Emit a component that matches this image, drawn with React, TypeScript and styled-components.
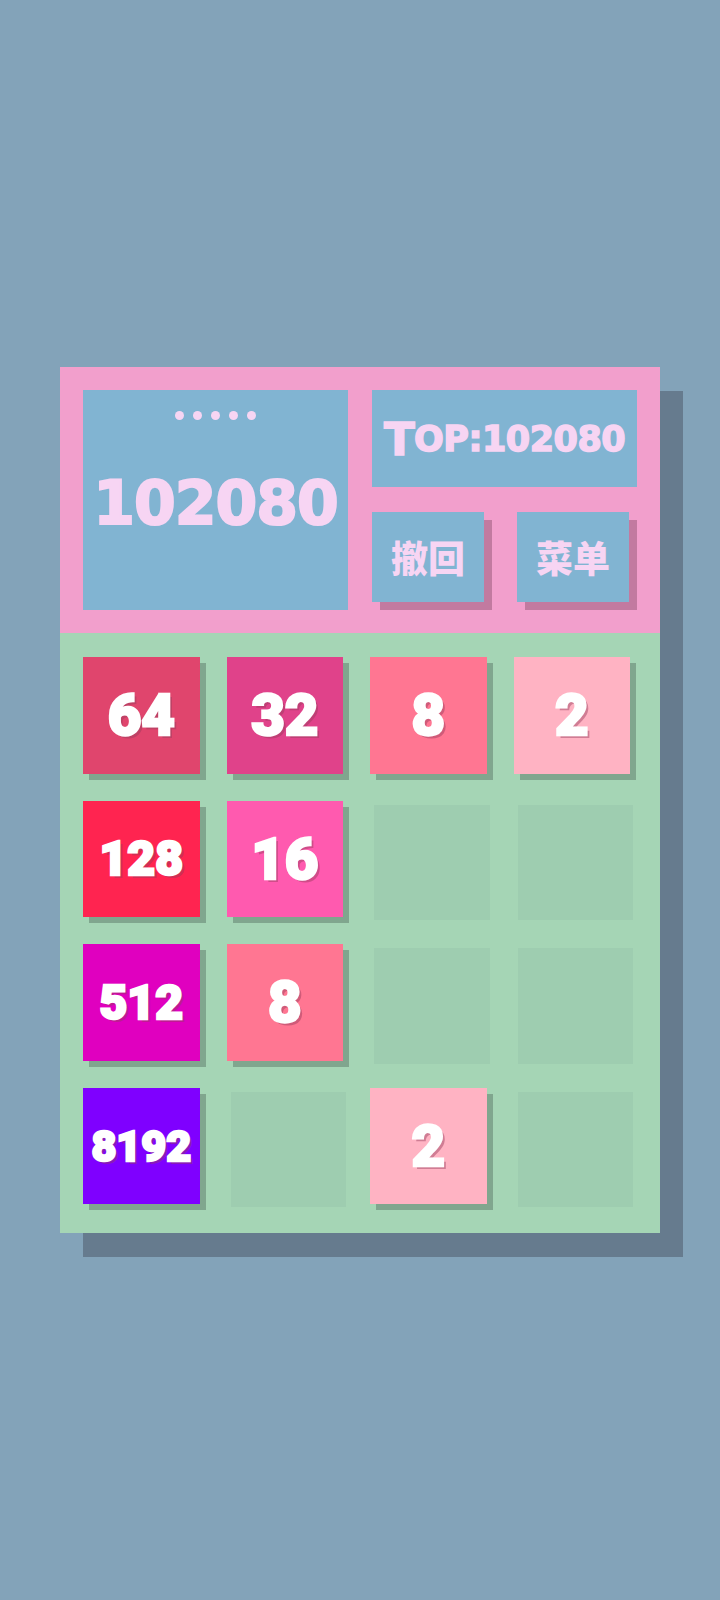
import React from 'react'
import styled, { createGlobalStyle } from 'styled-components'

const GlobalStyle = createGlobalStyle`
  html, body {
    margin: 0;
    padding: 0;
    background: #83a3b9;
  }
`

const headerText = '#f7d5f3'

const tileColors: Record<number, string> = {
  2: '#ffb3c3',
  8: '#ff7692',
  16: '#ff5aaf',
  32: '#e0428a',
  64: '#e0456d',
  128: '#ff2450',
  512: '#e000bf',
  8192: '#7f00ff',
}

const Screen = styled.div`
  width: 720px;
  height: 1600px;
  display: flex;
  align-items: center;
  justify-content: center;
  background: #83a3b9;
`

const Board = styled.div`
  width: 600px;
  display: flex;
  flex-direction: column;
  box-shadow: 23px 24px 0 #667b8e;
`

const Header = styled.div`
  height: 266px;
  box-sizing: border-box;
  padding: 23px;
  background: #f29fcc;
  display: grid;
  grid-template-columns: 1fr 1fr;
  column-gap: 24px;
`

const ScoreBox = styled.div`
  background: #81b4d2;
  display: flex;
  flex-direction: column;
  align-items: center;
`

const Dots = styled.div`
  display: flex;
  gap: 9px;
  margin-top: 21px;
`

const Dot = styled.span`
  width: 9px;
  height: 9px;
  border-radius: 50%;
  background: ${headerText};
`

const Score = styled.div`
  margin-top: 53px;
  font-family: 'DejaVu Sans', sans-serif;
  font-weight: 700;
  font-size: 60px;
  line-height: 1;
  letter-spacing: -1px;
  color: ${headerText};
  -webkit-text-stroke: 2px ${headerText};
`

const Side = styled.div`
  display: grid;
  grid-template-rows: 97px 90px;
  row-gap: 25px;
`

const BestBox = styled.div`
  background: #81b4d2;
  display: flex;
  align-items: center;
  justify-content: center;
  font-family: 'DejaVu Sans', sans-serif;
  font-weight: 700;
  font-size: 35px;
  line-height: 1;
  letter-spacing: -0.5px;
  color: ${headerText};
  -webkit-text-stroke: 1.5px ${headerText};
  padding-top: 2px;
`

const Initial = styled.span`
  font-size: 45px;
`

const Actions = styled.div`
  display: grid;
  grid-template-columns: 1fr 1fr;
  column-gap: 25px;
`

const ActionButton = styled.button`
  all: unset;
  width: calc(100% - 8px);
  height: 90px;
  display: flex;
  align-items: center;
  justify-content: center;
  background: #81b4d2;
  box-shadow: 8px 8px 0 #c27aa0;
  font-family: 'Noto Sans CJK SC', sans-serif;
  font-weight: 900;
  font-size: 37px;
  color: ${headerText};
  cursor: pointer;
`

const Grid = styled.div`
  height: 600px;
  box-sizing: border-box;
  padding: 28px 27px 26px;
  background: #a5d5b5;
  display: grid;
  grid-template-columns: repeat(4, 1fr);
  grid-template-rows: repeat(4, 1fr);
  gap: 28px;
`

const Slot = styled.div<{ $filled: boolean }>`
  background: ${(p) => (p.$filled ? 'transparent' : '#9ecdb0')};
`

const Tile = styled.div<{ $color: string; $size: number }>`
  width: calc(100% + 1px);
  height: calc(100% + 1px);
  transform: translate(-4px, -4px);
  display: flex;
  align-items: center;
  justify-content: center;
  background: ${(p) => p.$color};
  box-shadow: 6px 6px 0 #80a68e;
  font-family: Roboto, 'Liberation Sans', sans-serif;
  font-weight: 900;
  font-size: ${(p) => p.$size}px;
  color: #fff;
  -webkit-text-stroke: 2.5px #fff;
  text-shadow: 3px 3px 0 rgba(150, 60, 90, 0.45);
`

const board: number[][] = [
  [64, 32, 8, 2],
  [128, 16, 0, 0],
  [512, 8, 0, 0],
  [8192, 0, 2, 0],
]

const fontFor = (n: number) => {
  const len = String(n).length
  if (len <= 2) return 58
  if (len === 3) return 48
  return 43
}

export default function App() {
  return (
    <>
      <GlobalStyle />
      <Screen>
        <Board>
          <Header>
            <ScoreBox>
              <Dots>
                {[0, 1, 2, 3, 4].map((i) => (
                  <Dot key={i} />
                ))}
              </Dots>
              <Score>102080</Score>
            </ScoreBox>
            <Side>
              <BestBox>
                <Initial>T</Initial>OP:102080
              </BestBox>
              <Actions>
                <ActionButton>撤回</ActionButton>
                <ActionButton>菜单</ActionButton>
              </Actions>
            </Side>
          </Header>
          <Grid>
            {board.flat().map((n, i) => (
              <Slot key={i} $filled={n > 0}>
                {n > 0 && (
                  <Tile $color={tileColors[n]} $size={fontFor(n)}>
                    {n}
                  </Tile>
                )}
              </Slot>
            ))}
          </Grid>
        </Board>
      </Screen>
    </>
  )
}
